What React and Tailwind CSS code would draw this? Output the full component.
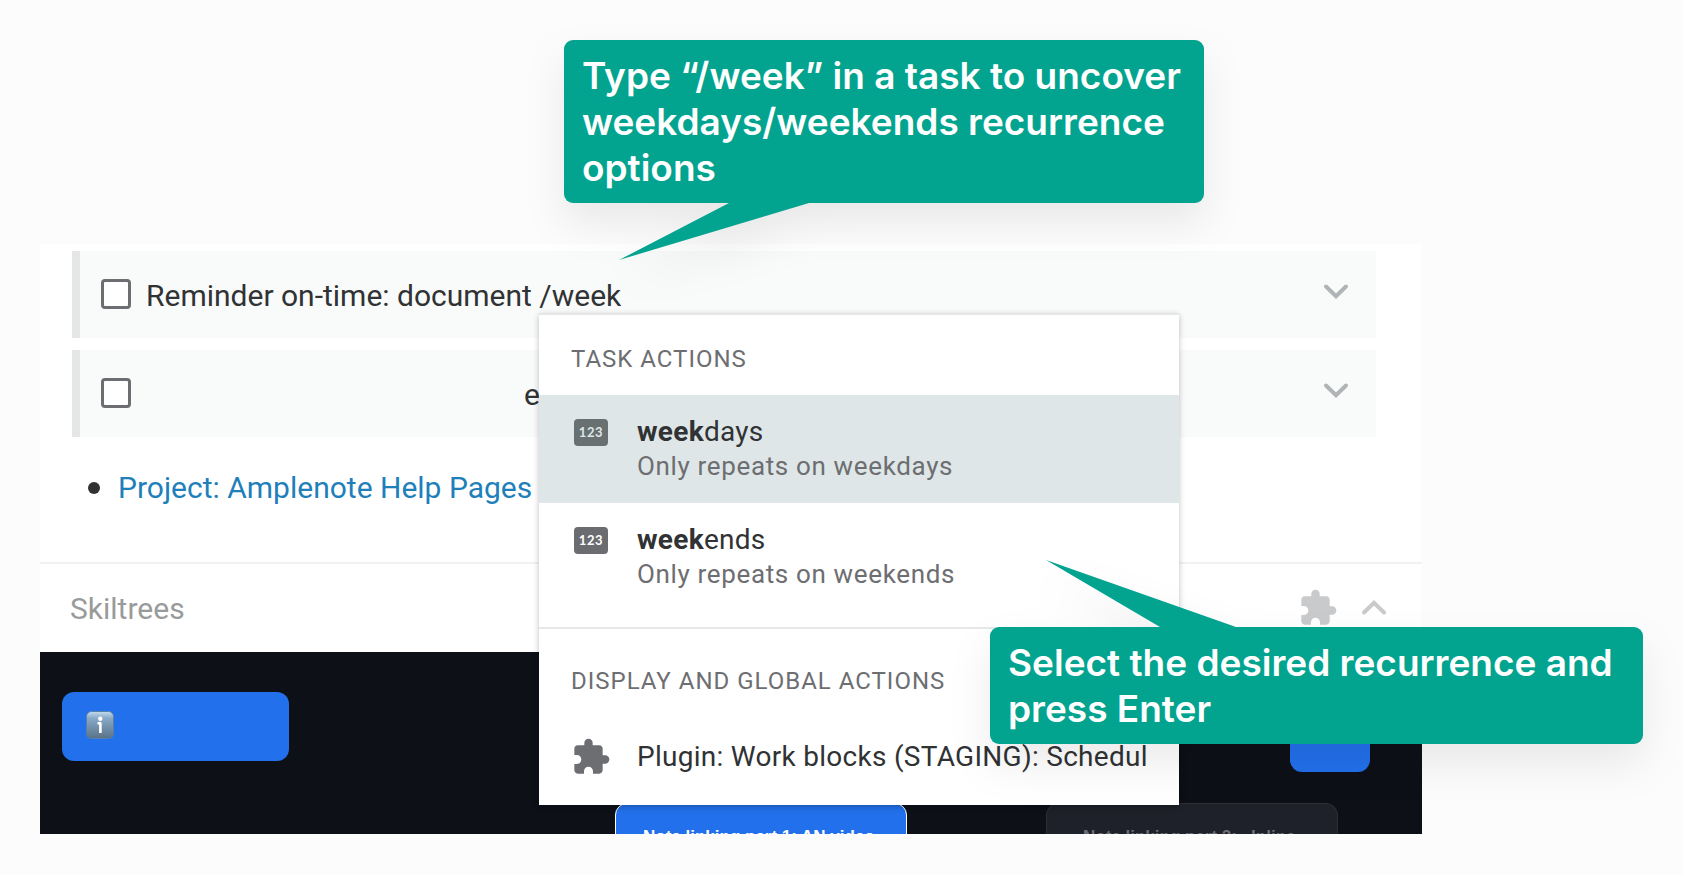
import React from "react";
import { MdExtension } from "react-icons/md";

const Chevron = ({ up }) => (
  <svg
    viewBox="0 0 40 40"
    className={up ? "size-10 rotate-180" : "size-10"}
    fill="none"
    stroke="currentColor"
    strokeWidth="4"
    aria-hidden="true"
  >
    <path d="M10 15.5L20 25.2L30 15.5" strokeLinecap="round" />
  </svg>
);

const TaskRow = ({ id, text, textClass }) => (
  <li className="flex h-[87px] items-start border-l-8 border-[#e4e7e6] bg-[#f9fbfa] pl-[21px] pr-5 pt-[28px]">
    <input
      id={id}
      type="checkbox"
      className="size-[30px] shrink-0 appearance-none rounded border-3 border-[#6d6e71] bg-white"
    />
    <label
      htmlFor={id}
      className={`grow whitespace-nowrap text-[30px] leading-[34px] text-[#303234] ${textClass}`}
    >
      {text}
    </label>
    <button type="button" aria-label="Show task details" className="-mt-2 text-[#b1b4b6]">
      <Chevron />
    </button>
  </li>
);

const NumberBadge = ({ active }) => (
  <span
    className={`mt-6 flex h-[27px] w-[34px] shrink-0 items-center justify-center rounded font-['Lato'] text-[13px] font-bold leading-none tracking-wider ${
      active ? "bg-[#687072] text-[#dee6e7]" : "bg-[#6a6c70] text-white"
    }`}
  >
    123
  </span>
);

const Suggestion = ({ match, rest, detail, active }) => (
  <li>
    <button
      type="button"
      className={`flex h-[108px] w-full items-start gap-[29px] pl-[35px] text-left ${
        active ? "bg-[#dee6e7]" : "bg-white"
      }`}
    >
      <NumberBadge active={active} />
      <span className="pt-[19px]">
        <span className="block text-[28px] leading-[36px] tracking-[0.01em] text-[#303234]">
          <b>{match}</b>
          {rest}
        </span>
        <span className="block text-[26px] leading-[32px] tracking-wide text-[#6d6e71]">
          {detail}
        </span>
      </span>
    </button>
  </li>
);

const InfoIcon = () => (
  <svg viewBox="0 0 28 28" className="size-7" aria-hidden="true">
    <defs>
      <linearGradient id="info" x1="0" y1="0" x2="0" y2="1">
        <stop offset="0" stopColor="#c4dcec" />
        <stop offset="0.25" stopColor="#88a9c8" />
        <stop offset="1" stopColor="#587287" />
      </linearGradient>
    </defs>
    <rect x="0.5" y="0.5" width="27" height="27" rx="5" fill="url(#info)" stroke="#5a7fa8" />
    <circle cx="14.3" cy="7.8" r="2.2" fill="#fff" />
    <path d="M11.5 12.3H14.4V22" fill="none" stroke="#fff" strokeWidth="2.6" strokeLinejoin="round" />
  </svg>
);

const SuggestionMenu = () => (
  <div className="absolute left-[499px] top-[69px] h-[492px] w-[640px] overflow-hidden border-t-2 border-[#e4e7e6] bg-white shadow-[0_2px_6px_rgba(0,0,0,0.25)]">
    <h2 className="pl-8 pt-[27px] text-[24px] leading-[34px] tracking-[1px] text-[#6d6e71]">
      TASK ACTIONS
    </h2>
    <ul className="mt-[19px] border-b-2 border-[#e6e7e7] pb-4">
      <Suggestion match="week" rest="days" detail="Only repeats on weekdays" active />
      <Suggestion match="week" rest="ends" detail="Only repeats on weekends" />
    </ul>
    <h2 className="pl-8 pt-[35px] text-[24px] leading-[34px] tracking-[1px] text-[#6d6e71]">
      DISPLAY AND GLOBAL ACTIONS
    </h2>
    <button
      type="button"
      className="mt-[37px] flex w-full items-center gap-[26px] pl-8 text-left text-[28px] leading-[44px] tracking-[0.01em] text-[#303234]"
    >
      <MdExtension className="size-10 shrink-0 text-[#6d6e71]" />
      <span className="whitespace-nowrap">Plugin: Work blocks (STAGING): Schedul</span>
    </button>
  </div>
);

const Callout = ({ className, tail, children }) => (
  <div
    className={`absolute rounded-[9px] bg-[#02a490] pb-3 pl-[18px] pr-3 pt-[13px] font-['Inter',sans-serif] text-[37px] font-semibold leading-[46px] text-white drop-shadow-[0_20px_20px_rgba(0,0,0,0.08)] ${className}`}
  >
    {children}
    {tail}
  </div>
);

const App = () => {
  return (
    <main className="relative min-h-screen overflow-hidden bg-[#fcfcfc] pb-10 pl-10 pr-[261px] pt-[244px] font-['Roboto',sans-serif]">
      <section className="relative bg-white">
        <ul className="ml-8 mr-[46px] flex flex-col gap-3 pt-[7px]">
          <TaskRow id="task-1" text="Reminder on-time: document /week" textClass="pl-[15px]" />
          <TaskRow id="task-2" text="e" textClass="pl-[393px]" />
        </ul>
        <ul className="list-none pb-[56px] pl-12 pt-[33px]">
          <li className="flex items-center gap-[18px] text-[30px] leading-[36px]">
            <span className="size-3 rounded-full bg-[#303234]" />
            <a href="#project" className="text-[#1f7fbb]">
              Project: Amplenote Help Pages
            </a>
          </li>
        </ul>
        <div className="flex h-[90px] items-center border-t-2 border-[#f2f2f2] pl-[30px] pr-7 text-[30px] text-[#999b9b]">
          <h2 className="grow">Skiltrees</h2>
          <button type="button" aria-label="Plugin settings" className="text-[#c9cacc]">
            <MdExtension className="size-10" />
          </button>
          <button type="button" aria-label="Collapse" className="ml-4 text-[#c9cacc]">
            <Chevron up />
          </button>
        </div>
        {/* skill tree canvas */}
        <div className="relative h-[182px] overflow-hidden bg-[#0d1017] font-['Liberation_Sans',sans-serif] text-[17px] font-bold">
          <button
            type="button"
            aria-label="Info"
            className="absolute left-[22px] top-[40px] flex h-[69px] w-[227px] items-start rounded-xl bg-[#2270eb] pl-6 pt-[19px]"
          >
            <InfoIcon />
          </button>
          <button
            type="button"
            aria-label="Options"
            className="absolute right-[52px] top-[51px] h-[69px] w-20 rounded-xl bg-[#2270eb]"
          />
          <div className="absolute left-[575px] top-[151px] h-20 w-[292px] rounded-xl border border-white bg-[#2270eb] pl-[27px] pt-5 text-white">
            Note linking part 1: AN video
          </div>
          <div className="absolute left-[1006px] top-[151px] h-20 w-[292px] rounded-xl border border-[#2b2e36] bg-[#1e2129] pl-9 pt-5 text-[#6b6e76]">
            Note linking part 2: &nbsp; Inline
          </div>
        </div>
        <SuggestionMenu />
      </section>

      <Callout
        className="left-[564px] top-10 w-[640px]"
        tail={
          <svg viewBox="0 0 190 58" className="absolute left-[55px] top-[162px] h-[58px] w-[190px]">
            <path d="M0 58L110 1V0H190V1Z" fill="#02a490" />
          </svg>
        }
      >
        Type “/week” in a task to uncover weekdays/weekends recurrence options
      </Callout>
      <Callout
        className="left-[990px] top-[627px] w-[653px]"
        tail={
          <svg viewBox="0 0 190 68" className="absolute -top-[67px] left-14 h-[68px] w-[190px]">
            <path d="M0 0L114 67V68H190V67Z" fill="#02a490" />
          </svg>
        }
      >
        Select the desired recurrence and press Enter
      </Callout>
    </main>
  );
};

export default App;
